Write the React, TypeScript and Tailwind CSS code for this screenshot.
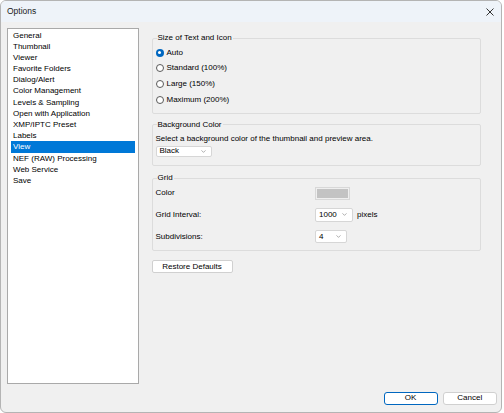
import { ChevronDown } from 'lucide-react';

const categories = [
  'General',
  'Thumbnail',
  'Viewer',
  'Favorite Folders',
  'Dialog/Alert',
  'Color Management',
  'Levels & Sampling',
  'Open with Application',
  'XMP/IPTC Preset',
  'Labels',
  'View',
  'NEF (RAW) Processing',
  'Web Service',
  'Save',
];

const sizes = ['Auto', 'Standard (100%)', 'Large (150%)', 'Maximum (200%)'];

function Radio({ checked }: { checked: boolean }) {
  if (checked) {
    return (
      <span className="w-[8px] h-[8px] rounded-full bg-[#0067c0] flex items-center justify-center">
        <span className="w-[3px] h-[3px] rounded-full bg-white" />
      </span>
    );
  }
  return <span className="w-[8px] h-[8px] rounded-full border border-[#5a5a5a] bg-white" />;
}

function Select({ value, width, height }: { value: string; width: string; height: string }) {
  return (
    <div
      className={`${width} ${height} flex items-center justify-between bg-white border border-[#d6d6d6] rounded-[2px] pl-[3px] pr-[4px]`}
    >
      <span>{value}</span>
      <ChevronDown className="w-[7px] h-[7px] text-[#777]" strokeWidth={2} />
    </div>
  );
}

export default function App() {
  return (
    <div className="w-[504px] h-[413px] bg-white font-['Liberation_Sans',Arial,sans-serif] text-[8px] text-black">
      <div className="w-[502px] h-[413px] flex flex-col border border-[#b4b4b4] rounded-[6px] bg-[#f0f0f0] overflow-hidden">
        {/* title bar */}
        <div className="h-[21px] shrink-0 flex items-center justify-between bg-[#eef3f9] pl-[6px] pr-[6px]">
          <span className="text-[8.5px] text-[#1a1a1a]">Options</span>
          <svg width="8" height="8" viewBox="0 0 8 8" className="mr-[1px]">
            <path d="M0.5 0.5 L7.5 7.5 M7.5 0.5 L0.5 7.5" stroke="#333" strokeWidth="1" />
          </svg>
        </div>

        <div className="flex flex-col pl-[6px] pt-[6px]">
          <div className="flex h-[356px]">
            {/* category list */}
            <div className="w-[132px] h-full bg-white border border-[#a9a9a9] pt-[0.5px] px-[3px]">
              {categories.map((c) => (
                <div
                  key={c}
                  className={`h-[11.2px] leading-[11.2px] pl-[2px] ${
                    c === 'View' ? 'bg-[#0078d7] text-white' : ''
                  }`}
                >
                  {c}
                </div>
              ))}
            </div>

            {/* settings */}
            <div className="w-[329px] ml-[12.5px] pt-[5.3px] flex flex-col">
              <fieldset className="border border-[#dcdcdc] rounded-[2px] px-[3px] pb-[5px]">
                <legend className="ml-[1px] px-[1px] leading-[10px]">Size of Text and Icon</legend>
                <div className="pt-[1.4px] flex flex-col">
                  {sizes.map((s, i) => (
                    <div key={s} className="h-[15.8px] flex items-center gap-[3px]">
                      <Radio checked={i === 0} />
                      <span>{s}</span>
                    </div>
                  ))}
                </div>
              </fieldset>

              <fieldset className="mt-[6px] border border-[#dcdcdc] rounded-[2px] px-[3px] pb-[8px]">
                <legend className="ml-[1px] px-[1px] leading-[10px]">Background Color</legend>
                <div className="pt-[4.3px] leading-[10px]">
                  Select a background color of the thumbnail and preview area.
                </div>
                <div className="mt-[1.7px]">
                  <Select value="Black" width="w-[56px]" height="h-[11px]" />
                </div>
              </fieldset>

              <fieldset className="mt-[7.5px] border border-[#dcdcdc] rounded-[2px] px-[3px] pb-[7px]">
                <legend className="ml-[1px] px-[1px] leading-[10px]">Grid</legend>
                <div className="pt-[3.3px] flex flex-col gap-[8.4px]">
                  <div className="h-[13.3px] flex items-center">
                    <span className="w-[159.5px]">Color</span>
                    <div className="w-[35px] h-[13.3px] border border-[#d8d8d8] bg-[#efefef] p-[1px]">
                      <div className="w-full h-full bg-[#c3c3c3]" />
                    </div>
                  </div>
                  <div className="h-[13.3px] flex items-center">
                    <span className="w-[159.5px]">Grid Interval:</span>
                    <Select value="1000" width="w-[38px]" height="h-[13.3px]" />
                    <span className="ml-[4px]">pixels</span>
                  </div>
                  <div className="h-[13.3px] flex items-center">
                    <span className="w-[159.5px]">Subdivisions:</span>
                    <Select value="4" width="w-[31.5px]" height="h-[13.3px]" />
                  </div>
                </div>
              </fieldset>

              <button className="mt-[9px] w-[81px] h-[12.5px] bg-white border border-[#d0d0d0] rounded-[2px] flex items-center justify-center">
                Restore Defaults
              </button>
            </div>
          </div>

          {/* dialog buttons */}
          <div className="mt-[8px] flex justify-end gap-[5px] pr-[4px]">
            <button className="w-[54px] h-[12.5px] bg-white border border-[#0067c0] rounded-[3px] flex items-center justify-center">
              OK
            </button>
            <button className="w-[54.5px] h-[12.5px] bg-white border border-[#d0d0d0] rounded-[3px] flex items-center justify-center">
              Cancel
            </button>
          </div>
        </div>
      </div>
    </div>
  );
}
